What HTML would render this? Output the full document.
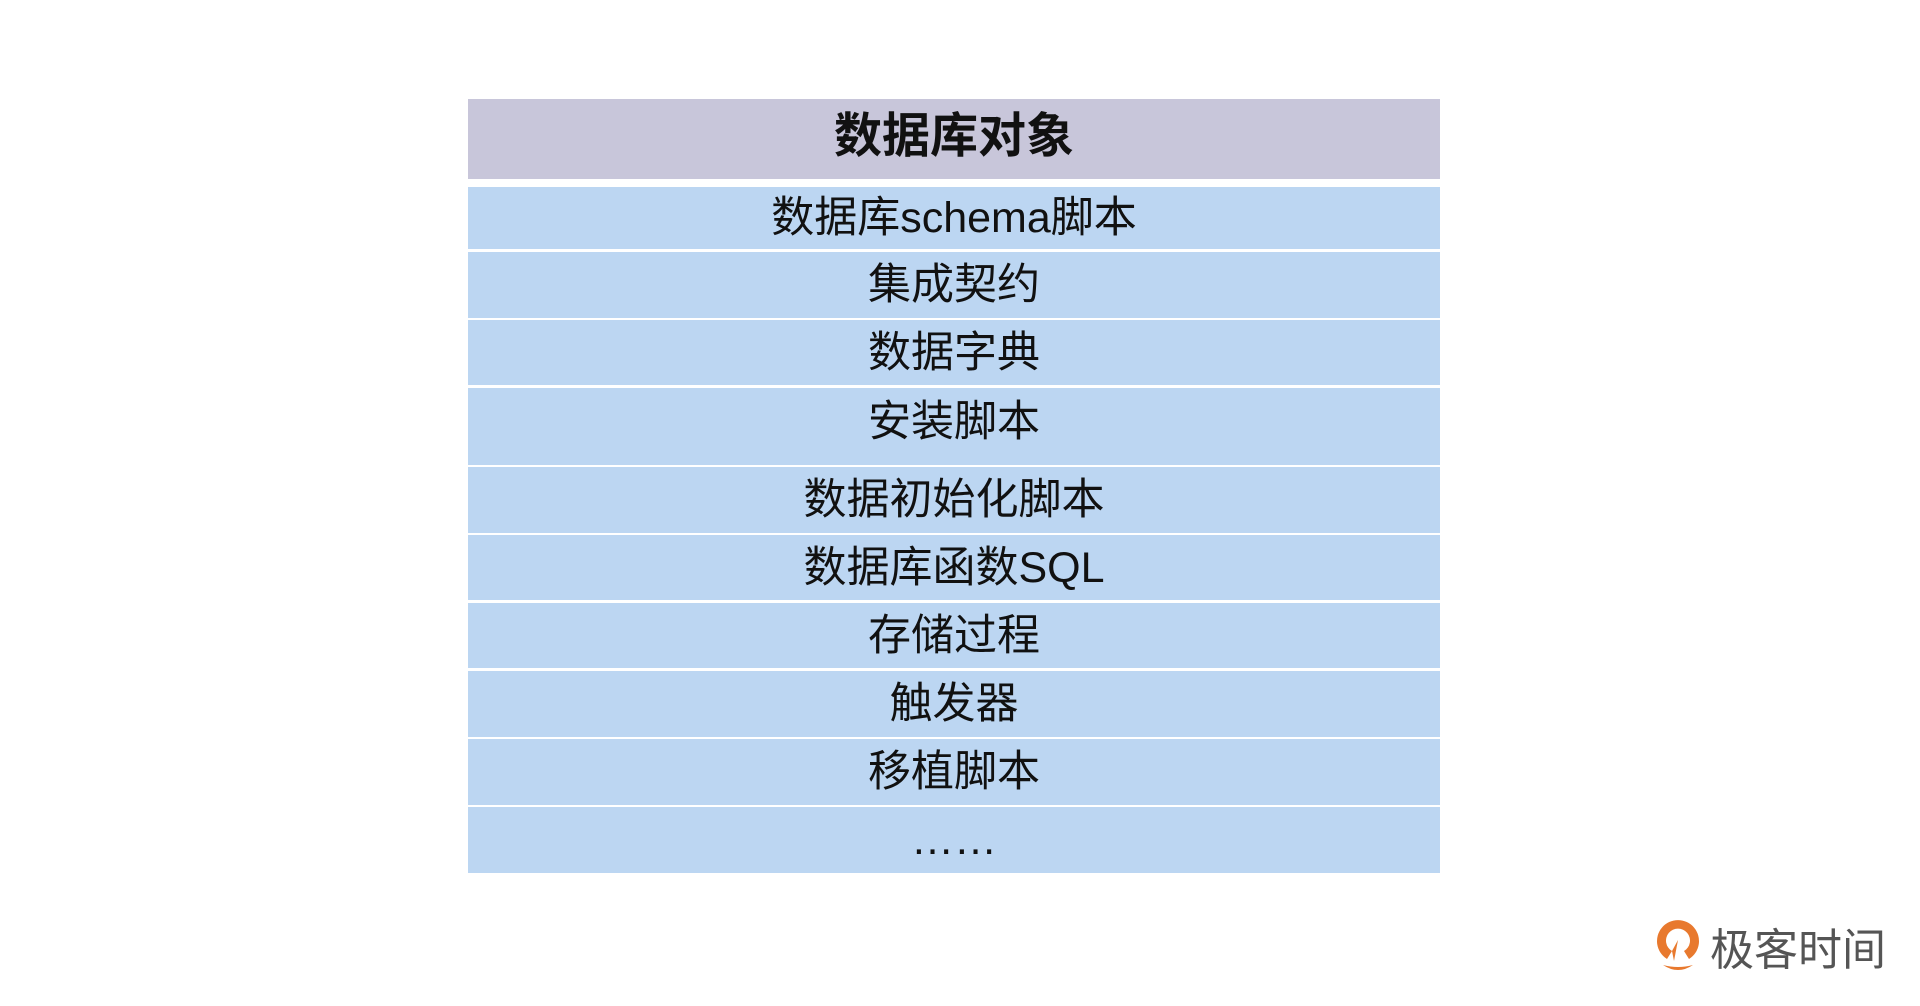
<!DOCTYPE html>
<html><head><meta charset="utf-8"><style>
body{margin:0;width:1920px;height:1006px;background:#fff;position:relative;overflow:hidden;font-family:"Liberation Sans","Noto Sans CJK SC",sans-serif}
.r{position:absolute;left:468px;width:972px;background:#bcd6f2;color:#111;font-size:43px;text-align:center;box-sizing:border-box}
.h{background:#c8c6da;font-weight:bold;font-size:48px}
</style></head><body>
<div class="r h" style="top:99px;height:80px;line-height:76px">数据库对象</div>
<div class="r" style="top:187px;height:62px;line-height:62px">数据库schema脚本</div>
<div class="r" style="top:252px;height:66px;line-height:66px">集成契约</div>
<div class="r" style="top:320px;height:65px;line-height:66px">数据字典</div>
<div class="r" style="top:388px;height:77px;line-height:68px">安装脚本</div>
<div class="r" style="top:467px;height:66px;line-height:66px">数据初始化脚本</div>
<div class="r" style="top:535px;height:65px;line-height:66px">数据库函数SQL</div>
<div class="r" style="top:603px;height:65px;line-height:66px">存储过程</div>
<div class="r" style="top:671px;height:66px;line-height:66px">触发器</div>
<div class="r" style="top:739px;height:66px;line-height:66px">移植脚本</div>
<div class="r" style="top:807px;height:66px;line-height:66px">……</div>
<svg style="position:absolute;left:1650px;top:915px" width="56" height="62" viewBox="0 0 56 62">
<path d="M17 44A21 21 0 1 1 39 44L34 36A12 12 0 1 0 22 36Z" fill="#e8792e"/>
<path d="M22 36L28 25L24 46Z" fill="#e8792e"/>
<path d="M13 50q15 10 30 0q-15 4-30 0z" fill="#e8792e"/>
</svg>
<div style="position:absolute;left:1710px;top:917px;font-size:44px;color:#555;font-family:'Noto Sans CJK SC',sans-serif;line-height:58px">极客时间</div>
</body></html>
